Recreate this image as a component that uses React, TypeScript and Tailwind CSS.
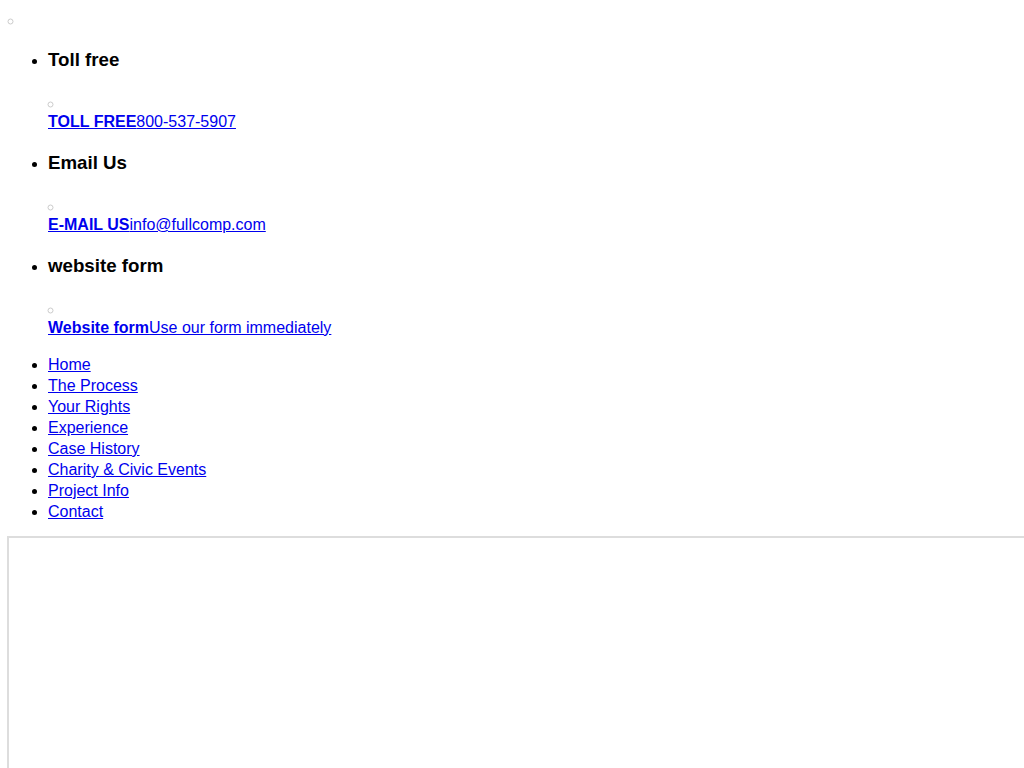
import React from "react";

const contacts = [
  { title: "Toll free", label: "TOLL FREE", value: "800-537-5907" },
  { title: "Email Us", label: "E-MAIL US", value: "info@fullcomp.com" },
  { title: "website form", label: "Website form", value: "Use our form immediately" },
];

const nav = [
  "Home",
  "The Process",
  "Your Rights",
  "Experience",
  "Case History",
  "Charity & Civic Events",
  "Project Info",
  "Contact",
];

export default function App() {
  return (
    <div className="h-[768px] w-[1024px] overflow-hidden bg-white font-['Liberation_Sans',Arial,sans-serif] text-[16px] leading-[21px] text-black">
      <div className="p-[8px]">
        <ul className="list-inside list-[circle]">
          <li className="pt-[4px] leading-[17px] text-[#cccccc]">
            <ul className="list-outside list-disc pl-[40px] leading-[21px] text-black">
              {contacts.map((c) => (
                <li key={c.title}>
                  <h3 className="my-[18.72px] text-[18.72px] font-bold leading-[23.5px]">{c.title}</h3>
                  <ul className="list-inside list-[circle]">
                    <li className="pt-[6px] leading-[15px] text-[#cccccc]">
                      <div className="leading-[21px] text-black">
                        <a href="#" className="text-[#0000ee] underline">
                          <strong>{c.label}</strong>
                          {c.value}
                        </a>
                      </div>
                    </li>
                  </ul>
                </li>
              ))}
            </ul>
          </li>
        </ul>
        <ul className="mb-[14px] mt-[16px] list-disc pl-[40px]">
          {nav.map((n) => (
            <li key={n}>
              <a href="#" className="text-[#0000ee] underline">
                {n}
              </a>
            </li>
          ))}
        </ul>
        <div className="-ml-px h-[400px] w-[1100px] border-l-2 border-t-2 border-[#dddddd]"></div>
      </div>
    </div>
  );
}
